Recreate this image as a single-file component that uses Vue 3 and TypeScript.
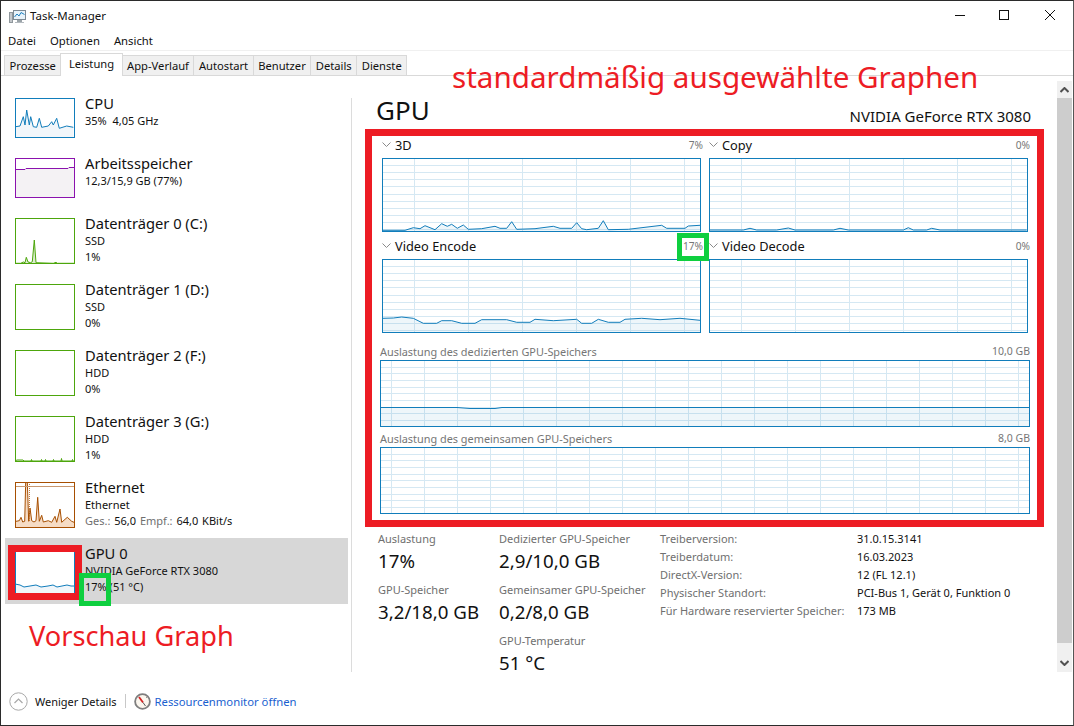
<script setup lang="ts">
type Pt = [number, number]
interface Thumb {
  name: string
  lines: string[]
  h: number
  color: string
  fill: string
  pts?: Pt[]
  active?: boolean
  top?: number
  eth?: boolean
}

const z = (arr: number[][], dx: number, dy: number): Pt[] =>
  arr.map(([x, y]) => [x / 3 + dx, y / 3 + dy] as Pt)

const toLine = (p: Pt[]) => p.map(([x, y]) => `${x.toFixed(1)},${y.toFixed(1)}`).join(' ')
const toArea = (p: Pt[], h: number) =>
  p.length ? `${p[0][0].toFixed(1)},${h} ${toLine(p)} ${p[p.length - 1][0].toFixed(1)},${h}` : ''

const blue = '#117dbb'
const blueFill = '#f1f6fa'
const green = '#4da60c'
const orange = '#a74f01'

const thumbs: Thumb[] = [
  {
    name: 'CPU', lines: ['35%  4,05 GHz'], h: 40, color: blue, fill: blueFill,
    pts: z([[47, 380], [60, 378], [70, 350], [75, 375], [80, 330], [88, 375], [92, 350], [100, 380], [110, 382], [118, 355], [125, 382], [145, 378], [155, 365], [160, 375], [170, 355], [178, 385], [200, 378], [220, 382]], -15, -98)
  },
  {
    name: 'Arbeitsspeicher', lines: ['12,3/15,9 GB (77%)'], h: 40, color: '#8b12ae', fill: '#f4f2f4',
    pts: [[0, 11.5], [10, 11.5], [11, 10.5], [53, 10.5], [54, 9.5], [60, 9.5]]
  },
  {
    name: 'Datenträger 0 (C:)', lines: ['SSD', '1%'], h: 46, color: green, fill: '#dcecd0',
    pts: z([[47, 340], [62, 340], [70, 336], [75, 338], [79, 322], [84, 336], [92, 338], [97, 335], [103, 270], [108, 338], [160, 340], [168, 337], [172, 340], [222, 340]], -15, -68)
  },
  { name: 'Datenträger 1 (D:)', lines: ['SSD', '0%'], h: 46, color: green, fill: '#eff7e8' },
  { name: 'Datenträger 2 (F:)', lines: ['HDD', '0%'], h: 46, color: green, fill: '#eff7e8' },
  {
    name: 'Datenträger 3 (G:)', lines: ['HDD', '1%'], h: 46, color: green, fill: '#dcecd0',
    pts: [[0, 45], [2, 44], [8, 44], [9, 45], [16, 45], [16.5, 43.5], [17, 45], [26, 45], [26.5, 43.5], [27, 45], [30, 45], [30.5, 43.5], [31, 45], [38, 45], [38.5, 43.5], [39, 45], [46, 45], [46.5, 42.5], [47, 45], [57, 45], [57.5, 43.5], [58, 45], [60, 45]]
  },
  {
    name: 'Ethernet', lines: ['Ethernet'], h: 46, color: orange, fill: '#f6dcc5', eth: true, top: 4,
    pts: z([[18, 130], [28, 128], [33, 118], [38, 132], [44, 130], [47, 12], [52, 12], [56, 130], [60, 90], [65, 128], [72, 132], [78, 128], [83, 58], [88, 130], [95, 112], [100, 132], [115, 128], [125, 133], [135, 115], [140, 133], [150, 93], [155, 133], [172, 118], [185, 130], [192, 133]], -5, -4)
  },
  {
    name: 'GPU 0', lines: ['NVIDIA GeForce RTX 3080', '17% (51 °C)'], h: 46, color: blue, fill: blueFill, active: true,
    pts: [[0, 36], [5, 37], [9, 39], [15, 38], [21, 37], [26, 39], [33, 38], [38, 37], [42, 39], [47, 38], [52, 37], [56, 38], [60, 38]]
  }
]

interface Big {
  w: number
  h: number
  hs: number
  vs: number
  vo: number
  pts?: Pt[]
}

const range = (from: number, to: number, step: number) => {
  const out: number[] = []
  for (let v = from; v < to; v += step) out.push(Math.round(v) + 0.5)
  return out
}

const g3d: Big = {
  w: 319, h: 74, hs: 7.1, vs: 54, vo: 32,
  pts: z([[68, 316], [135, 316], [160, 308], [180, 311], [195, 302], [225, 314], [245, 296], [262, 304], [275, 298], [292, 310], [310, 300], [325, 313], [365, 311], [405, 304], [420, 310], [440, 310], [455, 290], [470, 313], [525, 311], [580, 304], [600, 310], [635, 310], [650, 293], [665, 311], [680, 314], [715, 310], [730, 287], [745, 314], [805, 313], [905, 301], [920, 310], [975, 310], [985, 303], [1020, 301]], -22, -33)
}
const gCopy: Big = {
  w: 319, h: 74, hs: 7.1, vs: 54, vo: 32,
  pts: z([[30, 690], [130, 690], [150, 685], [170, 690], [230, 690], [265, 684], [285, 690], [400, 690], [420, 685], [445, 690], [610, 690], [625, 683], [640, 690], [680, 690], [695, 685], [720, 690], [980, 690]], -9, -158)
}
const gEnc: Big = {
  w: 319, h: 74, hs: 7.1, vs: 54, vo: 32,
  pts: z([[68, 250], [100, 249], [125, 246], [160, 250], [190, 265], [230, 265], [245, 257], [275, 257], [305, 265], [345, 265], [365, 254], [440, 254], [470, 262], [510, 262], [525, 253], [580, 257], [650, 253], [665, 265], [695, 265], [715, 253], [745, 262], [780, 262], [795, 253], [845, 250], [900, 254], [960, 250], [1020, 256]], -22, -24)
}
const gDec: Big = { w: 319, h: 74, hs: 7.1, vs: 54, vo: 32 }
const gDed: Big = {
  w: 650, h: 67, hs: 6.67, vs: 33, vo: 11,
  pts: [[0, 47.5], [77, 47.5], [90, 48.5], [115, 48.5], [122, 47.5], [650, 47.5]]
}
const gShr: Big = { w: 650, h: 67, hs: 6.67, vs: 33, vo: 11 }

const top = [
  { label: '3D', val: '7%', g: g3d },
  { label: 'Copy', val: '0%', g: gCopy },
  { label: 'Video Encode', val: '17%', g: gEnc },
  { label: 'Video Decode', val: '0%', g: gDec }
]
const wide = [
  { label: 'Auslastung des dedizierten GPU-Speichers', val: '10,0 GB', g: gDed },
  { label: 'Auslastung des gemeinsamen GPU-Speichers', val: '8,0 GB', g: gShr }
]
const tabs = ['Prozesse', 'Leistung', 'App-Verlauf', 'Autostart', 'Benutzer', 'Details', 'Dienste']
const info = [
  ['Treiberversion:', '31.0.15.3141'],
  ['Treiberdatum:', '16.03.2023'],
  ['DirectX-Version:', '12 (FL 12.1)'],
  ['Physischer Standort:', 'PCI-Bus 1, Gerät 0, Funktion 0'],
  ['Für Hardware reservierter Speicher:', '173 MB']
]
const col1 = [
  { l: 'Auslastung', v: '17%' },
  { l: 'GPU-Speicher', v: '3,2/18,0 GB' }
]
const col2 = [
  { l: 'Dedizierter GPU-Speicher', v: '2,9/10,0 GB' },
  { l: 'Gemeinsamer GPU-Speicher', v: '0,2/8,0 GB' },
  { l: 'GPU-Temperatur', v: '51 °C' }
]
</script>

<template>
  <div class="win">
    <header class="title">
      <svg class="appicon" width="17" height="16" viewBox="0 0 17 16">
        <rect x="0.5" y="4.5" width="3" height="10" fill="#c4c8cc" stroke="#8f979c" />
        <rect x="4.5" y="2.5" width="12" height="9" fill="#e8f3fa" stroke="#7d8a94" />
        <polyline points="5.5,9 8,6 10,8 12,4.5 15.5,6.5" fill="none" stroke="#1d80c0" />
        <rect x="8" y="12" width="5" height="2" fill="#9aa3a8" />
        <rect x="6" y="14" width="9" height="1" fill="#b5bbc0" />
      </svg>
      <span class="title-text">Task-Manager</span>
      <div class="caption">
        <svg width="46" height="30" viewBox="0 0 46 30"><line x1="20" y1="14.5" x2="30" y2="14.5" stroke="#111" /></svg>
        <svg width="46" height="30" viewBox="0 0 46 30"><rect x="18.5" y="9.5" width="9" height="9" fill="none" stroke="#111" /></svg>
        <svg width="46" height="30" viewBox="0 0 46 30"><path d="M18 9l10 10M28 9l-10 10" stroke="#111" fill="none" /></svg>
      </div>
    </header>
    <nav class="menu"><span>Datei</span><span>Optionen</span><span>Ansicht</span></nav>
    <div class="tabs">
      <span v-for="t in tabs" :key="t" class="tab" :class="{ on: t === 'Leistung' }">{{ t }}</span>
    </div>

    <div class="body">
      <aside class="side">
        <div v-for="t in thumbs" :key="t.name" class="row" :class="{ active: t.active }">
          <svg class="thumb" width="60" :height="t.h" :viewBox="`0 0 60 ${t.h}`">
            <rect x="0" y="0" width="60" :height="t.h" fill="#fff" />
            <template v-if="t.pts">
              <polygon :points="toArea(t.pts, t.h)" :fill="t.fill" />
              <polyline :points="toLine(t.pts)" fill="none" :stroke="t.color" stroke-width="1" />
            </template>
            <line v-if="t.top" x1="0" :y1="t.top + 0.5" x2="60" :y2="t.top + 0.5" stroke="#c89870" />
            <line v-if="t.eth" x1="14.5" y1="0" x2="14.5" y2="40" stroke="#c07a40" stroke-dasharray="1 1" />
            <rect x="0.5" y="0.5" width="59" :height="t.h - 1" fill="none" :stroke="t.color" />
          </svg>
          <div class="row-text">
            <div class="row-name">{{ t.name }}</div>
            <div v-for="l in t.lines" :key="l" class="row-line">{{ l }}</div>
            <div v-if="t.eth" class="row-line eth"><i>Ges.:</i> 56,0 <i>Empf.:</i> 64,0 KBit/s</div>
          </div>
        </div>
      </aside>
      <div class="divider"></div>

      <main class="main">
        <div class="head">
          <span class="h-gpu">GPU</span>
          <span class="h-model">NVIDIA GeForce RTX 3080</span>
        </div>

        <section class="graphs">
          <div class="grid4">
            <div v-for="c in top" :key="c.label" class="cell">
              <div class="cell-head">
                <span class="cell-label">
                  <svg width="9" height="6" viewBox="0 0 9 6"><path d="M0.5 0.5L4.5 4.5L8.5 0.5" fill="none" stroke="#8a8a8a" /></svg>
                  {{ c.label }}
                </span>
                <span class="cell-val">{{ c.val }}</span>
              </div>
              <svg class="big" :width="c.g.w" :height="c.g.h" :viewBox="`0 0 ${c.g.w} ${c.g.h}`">
                <line v-for="y in range(c.g.hs, c.g.h, c.g.hs)" :key="'h' + y" x1="0" :x2="c.g.w" :y1="y" :y2="y" stroke="#d5e8f3" />
                <line v-for="x in range(c.g.vo, c.g.w, c.g.vs)" :key="'v' + x" y1="0" :y2="c.g.h" :x1="x" :x2="x" stroke="#d5e8f3" />
                <template v-if="c.g.pts">
                  <polygon :points="toArea(c.g.pts, c.g.h)" fill="#117dbb" fill-opacity="0.07" />
                  <polyline :points="toLine(c.g.pts)" fill="none" stroke="#117dbb" />
                </template>
                <rect x="0.5" y="0.5" :width="c.g.w - 1" :height="c.g.h - 1" fill="none" stroke="#117dbb" />
              </svg>
            </div>
          </div>
          <div v-for="c in wide" :key="c.label" class="wide">
            <div class="wide-head"><span>{{ c.label }}</span><span class="wide-val">{{ c.val }}</span></div>
            <svg class="big" :width="c.g.w" :height="c.g.h" :viewBox="`0 0 ${c.g.w} ${c.g.h}`">
              <line v-for="y in range(c.g.hs, c.g.h, c.g.hs)" :key="'h' + y" x1="0" :x2="c.g.w" :y1="y" :y2="y" stroke="#d5e8f3" />
              <line v-for="x in range(c.g.vo, c.g.w, c.g.vs)" :key="'v' + x" y1="0" :y2="c.g.h" :x1="x" :x2="x" stroke="#d5e8f3" />
              <template v-if="c.g.pts">
                <polygon :points="toArea(c.g.pts, c.g.h)" fill="#117dbb" fill-opacity="0.07" />
                <polyline :points="toLine(c.g.pts)" fill="none" stroke="#117dbb" />
              </template>
              <rect x="0.5" y="0.5" :width="c.g.w - 1" :height="c.g.h - 1" fill="none" stroke="#117dbb" />
            </svg>
          </div>
        </section>

        <section class="stats">
          <div class="s-col s1">
            <div v-for="s in col1" :key="s.l" class="stat"><div class="s-l">{{ s.l }}</div><div class="s-v">{{ s.v }}</div></div>
          </div>
          <div class="s-col s2">
            <div v-for="s in col2" :key="s.l" class="stat"><div class="s-l">{{ s.l }}</div><div class="s-v">{{ s.v }}</div></div>
          </div>
          <div class="info">
            <template v-for="i in info" :key="i[0]">
              <span class="s-l">{{ i[0] }}</span><span class="i-v">{{ i[1] }}</span>
            </template>
          </div>
        </section>
      </main>

      <div class="scroll">
        <div class="sb-btn"><svg width="9" height="6" viewBox="0 0 9 6"><path d="M0.5 5L4.5 1L8.5 5" fill="none" stroke="#505050" stroke-width="2" /></svg></div>
        <div class="sb-thumb"></div>
        <div class="sb-rest"><svg width="9" height="6" viewBox="0 0 9 6"><path d="M0.5 1L4.5 5L8.5 1" fill="none" stroke="#505050" stroke-width="2" /></svg></div>
      </div>
    </div>

    <footer class="foot">
      <span class="less">
        <svg width="19" height="19" viewBox="0 0 19 19"><circle cx="9.5" cy="9.5" r="8.7" fill="#fff" stroke="#a8a8a8" /><path d="M5.5 11L9.5 7L13.5 11" fill="none" stroke="#a8a8a8" stroke-width="1.2" /></svg>
        Weniger Details
      </span>
      <span class="sep"></span>
      <span class="res">
        <svg width="17" height="17" viewBox="0 0 17 17"><circle cx="8.5" cy="8.5" r="7.4" fill="#fbf6ee" stroke="#7f7f7f" stroke-width="1.8" /><path d="M5 4L9 9.5" stroke="#d42020" stroke-width="1.8" /><path d="M9 9.5L11.5 13" stroke="#555" /><path d="M12 5l1-1" stroke="#999" /></svg>
        <a>Ressourcenmonitor öffnen</a>
      </span>
    </footer>

    <div class="ann-red r1"></div>
    <div class="ann-red r2"></div>
    <div class="ann-green g1"></div>
    <div class="ann-green g2"></div>
    <div class="ann-text t1">standardmäßig ausgewählte Graphen</div>
    <div class="ann-text t2">Vorschau Graph</div>
  </div>
</template>

<style>
html, body { margin: 0; background: #fff; }
</style>

<style scoped>
.win {
  position: relative;
  width: 1074px;
  height: 726px;
  box-sizing: border-box;
  border: 1px solid #2b2b2b;
  border-right-color: #555;
  background: #fff;
  overflow: hidden;
  font-family: "Noto Sans", "Open Sans", sans-serif;
  font-size: 12px;
  color: #111;
  display: flex;
  flex-direction: column;
}
.title { height: 30px; display: flex; align-items: center; flex: none; }
.appicon { margin-left: 8px; }
.title-text { margin-left: 4px; font-size: 11.5px; padding-bottom: 2px; }
.caption { margin-left: auto; display: flex; }
.menu { height: 19px; display: flex; align-items: center; gap: 14px; padding-left: 7px; font-size: 11.3px; flex: none; }
.tabs {
  height: 26px;
  flex: none;
  border-top: 1px solid #f0f0f0;
  border-bottom: 1px solid #d9d9d9;
  padding: 0 0 0 3px;
  display: flex;
  align-items: flex-end;
  box-sizing: border-box;
}
.tab {
  height: 20px;
  box-sizing: border-box;
  background: #f0f0f0;
  border: 1px solid #d9d9d9;
  border-bottom: 0;
  margin-right: -1px;
  padding: 0 4.5px;
  font-size: 11.2px;
  line-height: 19px;
}
.tab.on {
  height: 23px;
  background: #fff;
  position: relative;
  margin-bottom: -1px;
  padding: 0 7.5px;
  line-height: 19px;
}
.body { flex: 1; display: flex; min-height: 0; }
.side { width: 350px; flex: none; padding: 12px 0 0 4px; box-sizing: border-box; }
.divider { width: 1px; flex: none; background: #dcdcdc; margin: 22px 0 53px; }
.row { display: flex; padding: 10px 0 10px 10px; width: 343px; box-sizing: border-box; }
.row.active { background: #d7d7d7; }
.thumb { flex: none; display: block; }
.row-text { margin-left: 10px; margin-top: -4px; }
.row-name { font-size: 14.7px; line-height: 19px; white-space: nowrap; }
.row-line { font-size: 11px; line-height: 15.5px; white-space: pre; }
.row-line.eth { word-spacing: 1px; }
.row-line i { font-style: normal; color: #6f6f6f; }
.main { width: 679px; flex: none; padding: 0 0 0 13px; box-sizing: border-box; }
.head { display: flex; justify-content: space-between; align-items: flex-end; height: 52px; padding: 0 0 0 11px; box-sizing: border-box; }
.h-gpu { font-size: 26px; line-height: 34px; margin-bottom: 1px; }
.h-model { font-size: 15px; line-height: 20px; margin-bottom: 2px; }
.graphs { padding: 0 0 0 15px; width: 650px; }
.grid4 { display: grid; grid-template-columns: 319px 319px; column-gap: 8px; row-gap: 0; margin: 4px 0 6px 2px; }
.cell { height: 101px; }
.cell-head { display: flex; justify-content: space-between; align-items: center; height: 26px; }
.cell-label { font-size: 12.8px; display: flex; align-items: center; gap: 4px; }
.cell-val { font-size: 10.2px; color: #767676; margin-right: -2px; }
.big { display: block; background: #fff; }
.wide-head { display: flex; justify-content: space-between; align-items: center; height: 20px; padding-top: 2px; box-sizing: border-box; font-size: 10.9px; color: #767676; white-space: nowrap; }
.wide-val { font-size: 10.5px; }
.stats { display: flex; padding: 16px 0 0 13px; }
.s-col { flex: none; }
.s1 { width: 121px; }
.s2 { width: 161px; }
.stat { height: 51px; }
.s-l { font-size: 11px; color: #6f6f6f; line-height: 18px; display: block; white-space: nowrap; }
.s-v { font-size: 18.7px; line-height: 26px; white-space: nowrap; }
.info { display: grid; grid-template-columns: 197px auto; align-content: start; }
.i-v { font-size: 11px; line-height: 18px; }
.scroll { width: 15px; margin: 5px 1px 53px auto; display: flex; flex-direction: column; background: #f0f0f0; flex: none; }
.sb-btn { height: 17px; display: flex; align-items: center; justify-content: center; }
.sb-thumb { height: 545px; background: #cdcdcd; }
.sb-rest { flex: 1; display: flex; align-items: flex-end; justify-content: center; padding-bottom: 6px; }
.foot { position: relative; height: 53px; flex: none; margin-top: -53px; display: flex; align-items: center; padding: 5px 0 0 8px; box-sizing: border-box; font-size: 11px; }
.less { display: flex; align-items: center; gap: 7px; }
.sep { width: 1px; height: 14px; background: #c8c8c8; margin: 0 8px; }
.res { display: flex; align-items: center; gap: 4px; font-size: 11.3px; }
.res a { color: #1a5fcf; }
.ann-red, .ann-green { position: absolute; box-sizing: border-box; pointer-events: none; }
.ann-red { border: 7px solid #ed1c24; }
.ann-green { border: 5px solid #0ecf3f; }
.r1 { left: 364px; top: 128px; width: 679px; height: 398px; }
.r2 { left: 7px; top: 544px; width: 74px; height: 55px; }
.g1 { left: 78px; top: 572px; width: 32px; height: 33px; }
.g2 { left: 676px; top: 232px; width: 32px; height: 28px; }
.ann-text { position: absolute; color: #ed1c24; white-space: nowrap; line-height: 1; }
.t1 { left: 451px; top: 61px; font-size: 29.6px; }
.t2 { left: 28px; top: 621px; font-size: 27.2px; }
</style>
